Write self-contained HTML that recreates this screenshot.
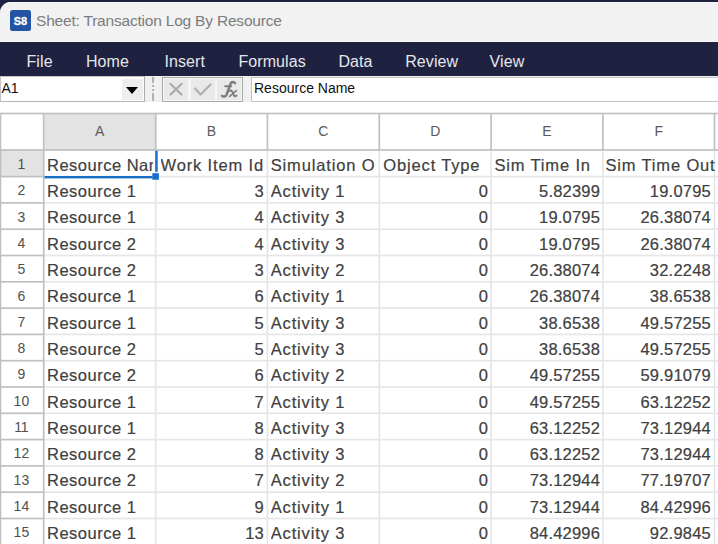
<!DOCTYPE html>
<html><head><meta charset="utf-8"><style>
html,body{margin:0;padding:0}
body{width:718px;height:544px;overflow:hidden;position:relative;background:#fff;font-family:"Liberation Sans",sans-serif}
.abs{position:absolute}
#topstrip{position:absolute;left:0;top:0;width:718px;height:42px;background:#1f2140}
#title{position:absolute;left:0;top:2px;width:718px;height:40px;background:#f2f2f2;border-top-left-radius:11px;box-shadow:inset 0 1px 0 #fbfbfb, inset 0 -1px 0 #fbfbfb}
#icon{position:absolute;left:10px;top:8px;width:21px;height:21px;background:#2354a4;border-radius:2.5px;color:#fff;font:bold 11px "Liberation Sans",sans-serif;line-height:22.5px;text-align:center;letter-spacing:0px;-webkit-text-stroke:0.3px #fff}
#ttext{position:absolute;left:36px;top:11.5px;font-size:15.5px;letter-spacing:-0.2px;color:#7c7c7c;white-space:nowrap;line-height:18px}
#menu{position:absolute;left:0;top:42px;width:718px;height:34px;background:#1f2140}
.mi{position:absolute;top:11px;font-size:16px;letter-spacing:0.1px;color:#e6e6ea;line-height:18px;white-space:nowrap}
#fbar{position:absolute;left:0;top:76px;width:718px;height:26px;background:#f0f0f0}
#namebox{position:absolute;left:0;top:76px;width:143px;height:25px;background:#fff;border:1px solid #c4c4c4;border-right-color:#ababab;border-bottom-color:#b5b5b5;box-sizing:border-box;width:144.5px;height:26px}
#nametext{position:absolute;left:1.5px;top:80px;font-size:14px;color:#111;line-height:16px}
#ddbtn{position:absolute;left:122px;top:79px;width:21px;height:21px;background:#eeeeee}
#tri{position:absolute;left:126px;top:86.5px;width:0;height:0;border-left:6px solid transparent;border-right:6px solid transparent;border-top:7px solid #000}
#dash{position:absolute;left:152.4px;top:77px;width:1.3px;height:24px;background:linear-gradient(#b2b2b2 0 6px,transparent 6px 8px,#b2b2b2 8px 10px,transparent 10px 12px,#b2b2b2 12px 14px,transparent 14px 16px,#b2b2b2 16px)}
#btngrp{position:absolute;left:162px;top:76.5px;width:81px;height:25px;box-sizing:border-box;border:1px solid #a9a9a9;background:#f6f6f6}
.btn{position:absolute;top:79px;height:21px;background:#e9e9e9}
#fx{position:absolute;left:251px;top:76.5px;width:470px;height:25px;box-sizing:border-box;border:1px solid #c4c4c4;background:#fff}
#fxtext{position:absolute;left:254px;top:80px;font-size:14px;color:#111;line-height:16px;white-space:nowrap}
.grid{position:absolute;left:0;top:0}
.c{position:absolute;height:20px;line-height:20px;font-size:16.5px;color:#404040;white-space:nowrap;overflow:hidden;-webkit-text-stroke:0.2px #404040}
.t{letter-spacing:0.7px}
.n{text-align:right;letter-spacing:0.2px}
.rn{position:absolute;left:-0.6px;width:44px;height:26px;line-height:26px;text-align:center;font-size:14px;color:#505050}
.ch{position:absolute;top:113px;height:37px;line-height:37px;text-align:center;font-size:14px;color:#5a5a5a}
</style></head><body>
<div id="topstrip"></div>
<div id="title"><div id="icon">S8</div></div>
<div id="ttext">Sheet: Transaction Log By Resource</div>
<div id="menu"><div class="mi" style="left:26.5px">File</div><div class="mi" style="left:85.9px">Home</div><div class="mi" style="left:164.4px">Insert</div><div class="mi" style="left:238.4px">Formulas</div><div class="mi" style="left:338.4px">Data</div><div class="mi" style="left:405.2px">Review</div><div class="mi" style="left:489.5px">View</div></div>
<div id="fbar"></div>
<div id="namebox"></div>
<div id="ddbtn"></div><div id="tri"></div>
<div id="nametext">A1</div>
<div id="dash"></div>
<div id="btngrp"></div>
<div class="btn" style="left:164px;width:24px"></div>
<div class="btn" style="left:190.5px;width:24px"></div>
<div class="btn" style="left:216.5px;width:24.5px"></div>
<svg class="abs" style="left:0;top:0" width="260" height="110" viewBox="0 0 260 110">
<path d="M170.5 84 L181.5 94.5 M181.5 84 L170.5 94.5" stroke="#a9a9a9" stroke-width="2.2" stroke-linecap="round" fill="none"/>
<path d="M195 88.5 L200.6 94.5 L210.5 84.5" stroke="#b0b0b0" stroke-width="2.2" stroke-linecap="round" stroke-linejoin="round" fill="none"/>
</svg>
<svg class="abs" style="left:0;top:0" width="260" height="110" viewBox="0 0 260 110">
<g fill="none" stroke="#7d7d7d" stroke-linecap="round">
<path d="M235 83.2 C234.2 81.6 231.6 81.4 230.6 83.6 L226.6 94.6 C225.8 96.6 223.4 97.2 222 95.8" stroke-width="2.5"/>
<path d="M225.2 86.2 L231.2 86.2" stroke-width="1.9"/>
<path d="M229.3 91 C230.6 89.9 232 90.6 232.8 92.6 L233.6 94.8 C234.2 96.6 235.4 96.6 236.6 95.6" stroke-width="1.9"/>
<path d="M236.4 90.6 L229.6 96.4" stroke-width="1.5"/>
</g></svg>
<div id="fx"></div>
<div id="fxtext">Resource Name</div>
<div style="position:absolute;left:0;top:102px;width:718px;height:11px;background:#fff"></div>
<svg class="grid" width="718" height="544" viewBox="0 0 718 544"><rect x="44.400000000000006" y="113.5" width="111.99999999999999" height="36.5" fill="#e3e3e3"/><rect x="0" y="150" width="43.7" height="26.3" fill="#e3e3e3"/><rect x="43.7" y="175.75000000000003" width="674.3" height="1.7" fill="#e6e6e6"/><rect x="43.7" y="202.05" width="674.3" height="1.7" fill="#e6e6e6"/><rect x="43.7" y="228.35000000000002" width="674.3" height="1.7" fill="#e6e6e6"/><rect x="43.7" y="254.65" width="674.3" height="1.7" fill="#e6e6e6"/><rect x="43.7" y="280.95" width="674.3" height="1.7" fill="#e6e6e6"/><rect x="43.7" y="307.25" width="674.3" height="1.7" fill="#e6e6e6"/><rect x="43.7" y="333.54999999999995" width="674.3" height="1.7" fill="#e6e6e6"/><rect x="43.7" y="359.85" width="674.3" height="1.7" fill="#e6e6e6"/><rect x="43.7" y="386.15" width="674.3" height="1.7" fill="#e6e6e6"/><rect x="43.7" y="412.45" width="674.3" height="1.7" fill="#e6e6e6"/><rect x="43.7" y="438.75" width="674.3" height="1.7" fill="#e6e6e6"/><rect x="43.7" y="465.05" width="674.3" height="1.7" fill="#e6e6e6"/><rect x="43.7" y="491.35" width="674.3" height="1.7" fill="#e6e6e6"/><rect x="43.7" y="517.65" width="674.3" height="1.7" fill="#e6e6e6"/><rect x="43.7" y="543.9499999999999" width="674.3" height="1.7" fill="#e6e6e6"/><rect x="154.85" y="150" width="1.7" height="400" fill="#e6e6e6"/><rect x="266.54999999999995" y="150" width="1.7" height="400" fill="#e6e6e6"/><rect x="378.45" y="150" width="1.7" height="400" fill="#e6e6e6"/><rect x="490.25" y="150" width="1.7" height="400" fill="#e6e6e6"/><rect x="602.05" y="150" width="1.7" height="400" fill="#e6e6e6"/><rect x="713.65" y="150" width="1.7" height="400" fill="#e6e6e6"/><rect x="0" y="112.65" width="718" height="1.7" fill="#c0c0c0"/><rect x="0" y="149.15" width="718" height="1.7" fill="#c0c0c0"/><rect x="42.85" y="113.5" width="1.7" height="36.5" fill="#c0c0c0"/><rect x="154.85" y="113.5" width="1.7" height="36.5" fill="#c0c0c0"/><rect x="266.54999999999995" y="113.5" width="1.7" height="36.5" fill="#c0c0c0"/><rect x="378.45" y="113.5" width="1.7" height="36.5" fill="#c0c0c0"/><rect x="490.25" y="113.5" width="1.7" height="36.5" fill="#c0c0c0"/><rect x="602.05" y="113.5" width="1.7" height="36.5" fill="#c0c0c0"/><rect x="713.65" y="113.5" width="1.7" height="36.5" fill="#c0c0c0"/><rect x="42.85" y="150" width="1.7" height="400" fill="#c0c0c0"/><rect x="0" y="175.75000000000003" width="43.7" height="1.7" fill="#c0c0c0"/><rect x="0" y="202.05" width="43.7" height="1.7" fill="#c0c0c0"/><rect x="0" y="228.35000000000002" width="43.7" height="1.7" fill="#c0c0c0"/><rect x="0" y="254.65" width="43.7" height="1.7" fill="#c0c0c0"/><rect x="0" y="280.95" width="43.7" height="1.7" fill="#c0c0c0"/><rect x="0" y="307.25" width="43.7" height="1.7" fill="#c0c0c0"/><rect x="0" y="333.54999999999995" width="43.7" height="1.7" fill="#c0c0c0"/><rect x="0" y="359.85" width="43.7" height="1.7" fill="#c0c0c0"/><rect x="0" y="386.15" width="43.7" height="1.7" fill="#c0c0c0"/><rect x="0" y="412.45" width="43.7" height="1.7" fill="#c0c0c0"/><rect x="0" y="438.75" width="43.7" height="1.7" fill="#c0c0c0"/><rect x="0" y="465.05" width="43.7" height="1.7" fill="#c0c0c0"/><rect x="0" y="491.35" width="43.7" height="1.7" fill="#c0c0c0"/><rect x="0" y="517.65" width="43.7" height="1.7" fill="#c0c0c0"/><rect x="0" y="543.9499999999999" width="43.7" height="1.7" fill="#c0c0c0"/><rect x="0" y="113" width="1.3" height="440" fill="#c0c0c0"/><rect x="44.5" y="176.0" width="107.99999999999999" height="2.4" fill="#1a6fc9"/><rect x="155.2" y="150.8" width="2.5" height="21" fill="#1a6fc9"/><rect x="152.3" y="173.2" width="6.6" height="6.5" fill="#1a6fc9"/></svg>
<div class="c" style="left:47.0px;width:105.5px;top:154.8px;letter-spacing:0.5px">Resource Name</div><div class="c" style="left:160.5px;width:108.2px;top:154.8px;letter-spacing:0.85px">Work Item Id</div><div class="c" style="left:270.7px;width:105.8px;top:154.8px;letter-spacing:0.85px">Simulation Object</div><div class="c" style="left:383.3px;width:108.3px;top:154.8px;letter-spacing:0.85px">Object Type</div><div class="c" style="left:494.4px;width:108.3px;top:154.8px;letter-spacing:0.85px">Sim Time In</div><div class="c" style="left:605.4px;width:116.0px;top:154.8px;letter-spacing:0.85px">Sim Time Out</div><div class="rn" style="top:151.0px">1</div><div class="c" style="left:47.0px;width:108.5px;top:181.1px;letter-spacing:0.5px">Resource 1</div><div class="c n" style="left:155.7px;width:108.3px;top:181.1px">3</div><div class="c" style="left:270.7px;width:108.4px;top:181.1px;letter-spacing:0.85px">Activity 1</div><div class="c n" style="left:379.3px;width:108.8px;top:181.1px">0</div><div class="c n" style="left:491.1px;width:109.0px;top:181.1px">5.82399</div><div class="c n" style="left:602.9px;width:108.0px;top:181.1px">19.0795</div><div class="rn" style="top:177.3px">2</div><div class="c" style="left:47.0px;width:108.5px;top:207.4px;letter-spacing:0.5px">Resource 1</div><div class="c n" style="left:155.7px;width:108.3px;top:207.4px">4</div><div class="c" style="left:270.7px;width:108.4px;top:207.4px;letter-spacing:0.85px">Activity 3</div><div class="c n" style="left:379.3px;width:108.8px;top:207.4px">0</div><div class="c n" style="left:491.1px;width:109.0px;top:207.4px">19.0795</div><div class="c n" style="left:602.9px;width:108.0px;top:207.4px">26.38074</div><div class="rn" style="top:203.6px">3</div><div class="c" style="left:47.0px;width:108.5px;top:233.7px;letter-spacing:0.5px">Resource 2</div><div class="c n" style="left:155.7px;width:108.3px;top:233.7px">4</div><div class="c" style="left:270.7px;width:108.4px;top:233.7px;letter-spacing:0.85px">Activity 3</div><div class="c n" style="left:379.3px;width:108.8px;top:233.7px">0</div><div class="c n" style="left:491.1px;width:109.0px;top:233.7px">19.0795</div><div class="c n" style="left:602.9px;width:108.0px;top:233.7px">26.38074</div><div class="rn" style="top:229.9px">4</div><div class="c" style="left:47.0px;width:108.5px;top:260.0px;letter-spacing:0.5px">Resource 2</div><div class="c n" style="left:155.7px;width:108.3px;top:260.0px">3</div><div class="c" style="left:270.7px;width:108.4px;top:260.0px;letter-spacing:0.85px">Activity 2</div><div class="c n" style="left:379.3px;width:108.8px;top:260.0px">0</div><div class="c n" style="left:491.1px;width:109.0px;top:260.0px">26.38074</div><div class="c n" style="left:602.9px;width:108.0px;top:260.0px">32.2248</div><div class="rn" style="top:256.2px">5</div><div class="c" style="left:47.0px;width:108.5px;top:286.3px;letter-spacing:0.5px">Resource 1</div><div class="c n" style="left:155.7px;width:108.3px;top:286.3px">6</div><div class="c" style="left:270.7px;width:108.4px;top:286.3px;letter-spacing:0.85px">Activity 1</div><div class="c n" style="left:379.3px;width:108.8px;top:286.3px">0</div><div class="c n" style="left:491.1px;width:109.0px;top:286.3px">26.38074</div><div class="c n" style="left:602.9px;width:108.0px;top:286.3px">38.6538</div><div class="rn" style="top:282.5px">6</div><div class="c" style="left:47.0px;width:108.5px;top:312.6px;letter-spacing:0.5px">Resource 1</div><div class="c n" style="left:155.7px;width:108.3px;top:312.6px">5</div><div class="c" style="left:270.7px;width:108.4px;top:312.6px;letter-spacing:0.85px">Activity 3</div><div class="c n" style="left:379.3px;width:108.8px;top:312.6px">0</div><div class="c n" style="left:491.1px;width:109.0px;top:312.6px">38.6538</div><div class="c n" style="left:602.9px;width:108.0px;top:312.6px">49.57255</div><div class="rn" style="top:308.8px">7</div><div class="c" style="left:47.0px;width:108.5px;top:338.9px;letter-spacing:0.5px">Resource 2</div><div class="c n" style="left:155.7px;width:108.3px;top:338.9px">5</div><div class="c" style="left:270.7px;width:108.4px;top:338.9px;letter-spacing:0.85px">Activity 3</div><div class="c n" style="left:379.3px;width:108.8px;top:338.9px">0</div><div class="c n" style="left:491.1px;width:109.0px;top:338.9px">38.6538</div><div class="c n" style="left:602.9px;width:108.0px;top:338.9px">49.57255</div><div class="rn" style="top:335.1px">8</div><div class="c" style="left:47.0px;width:108.5px;top:365.2px;letter-spacing:0.5px">Resource 2</div><div class="c n" style="left:155.7px;width:108.3px;top:365.2px">6</div><div class="c" style="left:270.7px;width:108.4px;top:365.2px;letter-spacing:0.85px">Activity 2</div><div class="c n" style="left:379.3px;width:108.8px;top:365.2px">0</div><div class="c n" style="left:491.1px;width:109.0px;top:365.2px">49.57255</div><div class="c n" style="left:602.9px;width:108.0px;top:365.2px">59.91079</div><div class="rn" style="top:361.4px">9</div><div class="c" style="left:47.0px;width:108.5px;top:391.5px;letter-spacing:0.5px">Resource 1</div><div class="c n" style="left:155.7px;width:108.3px;top:391.5px">7</div><div class="c" style="left:270.7px;width:108.4px;top:391.5px;letter-spacing:0.85px">Activity 1</div><div class="c n" style="left:379.3px;width:108.8px;top:391.5px">0</div><div class="c n" style="left:491.1px;width:109.0px;top:391.5px">49.57255</div><div class="c n" style="left:602.9px;width:108.0px;top:391.5px">63.12252</div><div class="rn" style="top:387.7px">10</div><div class="c" style="left:47.0px;width:108.5px;top:417.8px;letter-spacing:0.5px">Resource 1</div><div class="c n" style="left:155.7px;width:108.3px;top:417.8px">8</div><div class="c" style="left:270.7px;width:108.4px;top:417.8px;letter-spacing:0.85px">Activity 3</div><div class="c n" style="left:379.3px;width:108.8px;top:417.8px">0</div><div class="c n" style="left:491.1px;width:109.0px;top:417.8px">63.12252</div><div class="c n" style="left:602.9px;width:108.0px;top:417.8px">73.12944</div><div class="rn" style="top:414.0px">11</div><div class="c" style="left:47.0px;width:108.5px;top:444.1px;letter-spacing:0.5px">Resource 2</div><div class="c n" style="left:155.7px;width:108.3px;top:444.1px">8</div><div class="c" style="left:270.7px;width:108.4px;top:444.1px;letter-spacing:0.85px">Activity 3</div><div class="c n" style="left:379.3px;width:108.8px;top:444.1px">0</div><div class="c n" style="left:491.1px;width:109.0px;top:444.1px">63.12252</div><div class="c n" style="left:602.9px;width:108.0px;top:444.1px">73.12944</div><div class="rn" style="top:440.3px">12</div><div class="c" style="left:47.0px;width:108.5px;top:470.4px;letter-spacing:0.5px">Resource 2</div><div class="c n" style="left:155.7px;width:108.3px;top:470.4px">7</div><div class="c" style="left:270.7px;width:108.4px;top:470.4px;letter-spacing:0.85px">Activity 2</div><div class="c n" style="left:379.3px;width:108.8px;top:470.4px">0</div><div class="c n" style="left:491.1px;width:109.0px;top:470.4px">73.12944</div><div class="c n" style="left:602.9px;width:108.0px;top:470.4px">77.19707</div><div class="rn" style="top:466.6px">13</div><div class="c" style="left:47.0px;width:108.5px;top:496.7px;letter-spacing:0.5px">Resource 1</div><div class="c n" style="left:155.7px;width:108.3px;top:496.7px">9</div><div class="c" style="left:270.7px;width:108.4px;top:496.7px;letter-spacing:0.85px">Activity 1</div><div class="c n" style="left:379.3px;width:108.8px;top:496.7px">0</div><div class="c n" style="left:491.1px;width:109.0px;top:496.7px">73.12944</div><div class="c n" style="left:602.9px;width:108.0px;top:496.7px">84.42996</div><div class="rn" style="top:492.9px">14</div><div class="c" style="left:47.0px;width:108.5px;top:523.0px;letter-spacing:0.5px">Resource 1</div><div class="c n" style="left:155.7px;width:108.3px;top:523.0px">13</div><div class="c" style="left:270.7px;width:108.4px;top:523.0px;letter-spacing:0.85px">Activity 3</div><div class="c n" style="left:379.3px;width:108.8px;top:523.0px">0</div><div class="c n" style="left:491.1px;width:109.0px;top:523.0px">84.42996</div><div class="c n" style="left:602.9px;width:108.0px;top:523.0px">92.9845</div><div class="rn" style="top:519.2px">15</div><div class="ch" style="left:43.7px;width:112.0px">A</div><div class="ch" style="left:155.7px;width:111.7px">B</div><div class="ch" style="left:267.4px;width:111.9px">C</div><div class="ch" style="left:379.3px;width:111.8px">D</div><div class="ch" style="left:491.1px;width:111.8px">E</div><div class="ch" style="left:602.9px;width:111.6px">F</div>
</body></html>
